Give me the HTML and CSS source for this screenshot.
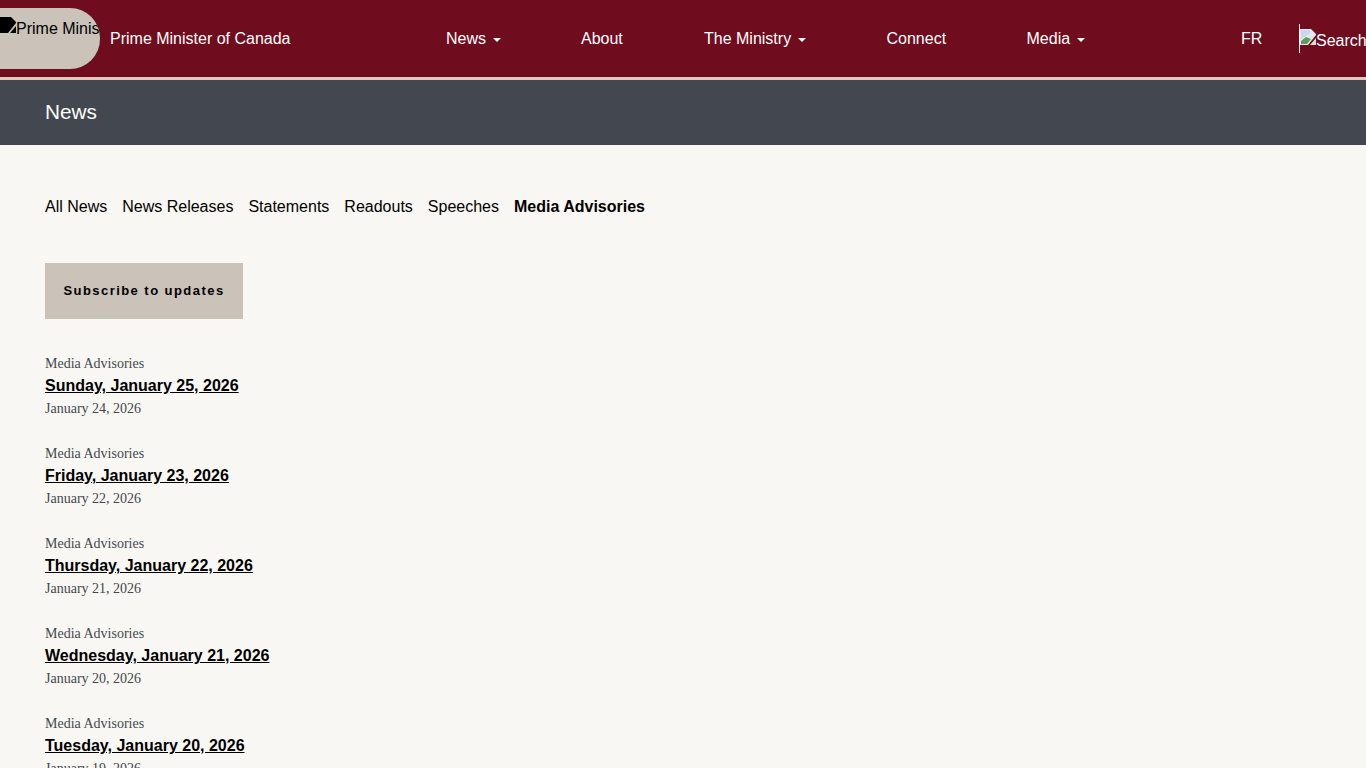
FILE: index.html
```html
<!DOCTYPE html>
<html lang="en">
<head>
<meta charset="utf-8">
<title>Media Advisories | Prime Minister of Canada</title>
<link rel="stylesheet" href="styles.css">
</head>
<body>
<header class="topbar">
  <a class="logo"><svg class="broken-dark" viewBox="0 0 16 16" width="16" height="16"><path d="M0 0H11L16 5V6L8 16H0Z" fill="#000"/><path d="M16 9V16H10Z" fill="#000"/></svg><span class="logo-alt">Prime Minister of Canada</span></a>
  <a class="brand">Prime Minister of Canada</a>
  <nav class="mainnav">
    <a class="navitem nav-news">News<i class="caret"></i></a>
    <a class="navitem nav-about">About</a>
    <a class="navitem nav-ministry">The Ministry<i class="caret"></i></a>
    <a class="navitem nav-connect">Connect</a>
    <a class="navitem nav-media">Media<i class="caret"></i></a>
  </nav>
  <a class="lang">FR</a>
  <div class="search"><svg class="broken-light" viewBox="0 0 16 16" width="16" height="16"><path d="M0 0H11L16 5V6L8 16H0Z" fill="#e4e8ee"/><path d="M1 12L6 8L11 10L7 15H1Z" fill="#5f9f55"/><path d="M1 1H10V5L6 7L1 10Z" fill="#c9d8ee"/><path d="M16 9V16H10Z" fill="#dcdcdc"/></svg><span>Search</span></div>
</header>
<div class="titlebar"><h1>News</h1></div>
<main class="content">
  <ul class="tabs">
    <li><a>All News</a></li>
    <li><a>News Releases</a></li>
    <li><a>Statements</a></li>
    <li><a>Readouts</a></li>
    <li><a>Speeches</a></li>
    <li><a class="active">Media Advisories</a></li>
  </ul>
  <a class="subscribe">Subscribe to updates</a>
  <article class="item"><div class="meta">Media Advisories</div><a class="headline">Sunday, January 25, 2026</a><div class="meta">January 24, 2026</div></article>
  <article class="item"><div class="meta">Media Advisories</div><a class="headline">Friday, January 23, 2026</a><div class="meta">January 22, 2026</div></article>
  <article class="item"><div class="meta">Media Advisories</div><a class="headline">Thursday, January 22, 2026</a><div class="meta">January 21, 2026</div></article>
  <article class="item"><div class="meta">Media Advisories</div><a class="headline">Wednesday, January 21, 2026</a><div class="meta">January 20, 2026</div></article>
  <article class="item"><div class="meta">Media Advisories</div><a class="headline">Tuesday, January 20, 2026</a><div class="meta">January 19, 2026</div></article>
</main>
</body>
</html>
```
FILE: styles.css
```css
* { box-sizing: border-box; }
html, body { margin: 0; height: 768px; overflow: hidden; }
body { background: #f9f7f3; font-family: "Liberation Sans", Arial, sans-serif; color: #000; }
.topbar { height: 80px; background: #6f0c1e; border-bottom: 3px solid #e0c9c1; display: flex; align-items: flex-start; position: relative; overflow: hidden; color: #fff; font-size: 16px; }
.logo { width: 100px; height: 61px; margin-top: 8px; background: #cbc2ba; border-radius: 0 30px 30px 0; color: #000; display: flex; align-items: flex-start; overflow: hidden; white-space: nowrap; padding-top: 9px; flex: none; }
.broken-dark { flex: none; }
.logo-alt { line-height: 24px; }
.brand { margin-left: 10px; margin-top: 30px; line-height: 18px; flex: none; width: 182px; white-space: nowrap; }
.mainnav { display: flex; margin-left: 154px; margin-top: 30px; flex: none; line-height: 18px; }
.navitem { white-space: nowrap; display: block; }
.nav-news { width: 135px; }
.nav-about { width: 123px; }
.nav-ministry { width: 182.5px; }
.nav-connect { width: 140px; }
.nav-media { width: 60px; }
.caret { display: inline-block; margin-left: 7px; vertical-align: middle; border-top: 4px solid #fff; border-left: 4px solid transparent; border-right: 4px solid transparent; }
.lang { position: absolute; left: 1241px; top: 30px; line-height: 18px; }
.search { position: absolute; left: 1299px; top: 24px; height: 29px; width: 67px; border-left: 1px solid #fff; display: flex; align-items: flex-start; padding-top: 5px; overflow: hidden; white-space: nowrap; }
.search span { line-height: 24px; }
.broken-light { flex: none; }
.titlebar { height: 65px; background: #43474f; display: flex; align-items: center; padding-left: 45px; padding-bottom: 2px; }
.titlebar h1 { margin: 0; font-size: 20.8px; font-weight: 400; color: #fff; }
.content { padding: 53px 45px 0; }
.tabs { list-style: none; margin: 0; padding: 0; display: flex; gap: 15px; font-size: 16px; line-height: 18px; }
.active { font-weight: 700; }
.subscribe { display: flex; align-items: center; justify-content: center; width: 198px; height: 56px; margin-top: 47px; margin-bottom: 35px; padding-bottom: 2px; background: #cbc2ba; font-size: 13px; font-weight: 700; letter-spacing: 1.45px; }
.item { height: 90px; }
.meta { font-family: "Liberation Serif", "Times New Roman", serif; font-size: 14px; line-height: 20px; color: #43474f; }
.headline { display: block; font-size: 16px; font-weight: 700; line-height: 23px; margin-bottom: 2px; text-decoration: underline; }
```
